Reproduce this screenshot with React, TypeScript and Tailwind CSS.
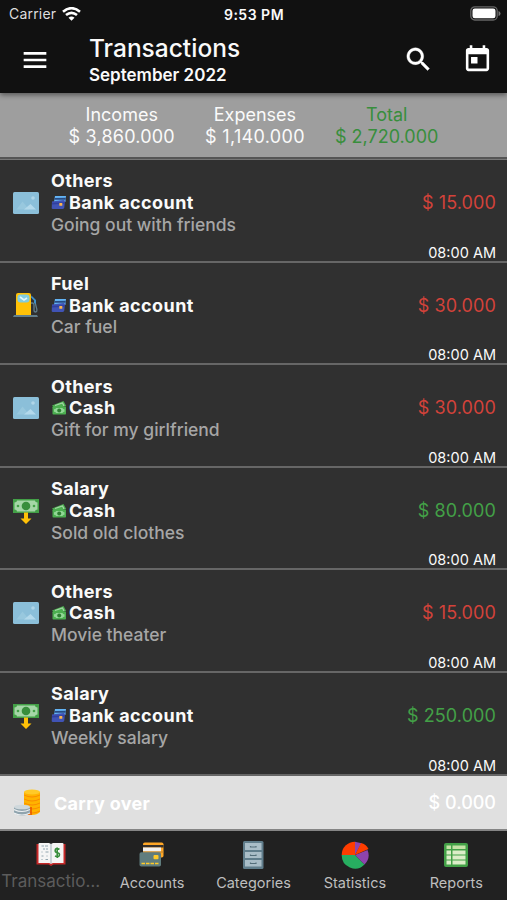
import React from 'react';

type IconType = React.FC;

interface Transaction {
  category: string;
  account: 'Bank account' | 'Cash';
  note: string;
  amount: string;
  income?: boolean;
  icon: IconType;
}

const PictureIcon: IconType = () => (
  <svg width="26" height="26" viewBox="0 0 26 26">
    <rect x="0" y="2" width="26" height="22" rx="1.5" fill="#8bbfd9" />
    <path d="M3.500 19.500 9.500 11.500 16 19.500Z" fill="#98c8de" />
    <path d="M11 19.500 17.500 14 23 19.500Z" fill="#b3d9eb" />
    <circle cx="20" cy="8" r="1.800" fill="#b0d6e8" />
  </svg>
);

const FuelIcon: IconType = () => (
  <svg width="26" height="26" viewBox="0 0 26 26">
    <path d="M18 11h1.500q1.500 0 1.500 2v5q0 2 1.600 2t1.200-3L22 10" fill="none" stroke="#607d8b" strokeWidth="1.300" />
    <path d="M18.500 3.500 23 8v4l-2-1V8.500L18 5.500Z" fill="#4090c8" />
    <path d="M3 3q0-2 2-2h11q2 0 2 2v20H3Z" fill="#ffc107" />
    <rect x="4.500" y="2.500" width="12" height="8" rx="3" fill="#81cce0" />
    <path d="m7 5 4 3 3-2" fill="none" stroke="#e1f5fe" strokeWidth="1.600" />
    <path d="M1 23h23l1 2H0Z" fill="#607d8b" />
  </svg>
);

const SalaryIcon: IconType = () => (
  <svg width="26" height="26" viewBox="0 0 26 26">
    <rect y="1" width="26" height="14" fill="#43a047" />
    <path d="M4 2.500h18q0 2 2.500 2v7q-2.500 0-2.500 2H4q0-2-2.500-2v-7q2.500 0 2.500-2Z" fill="#a5d6a7" />
    <circle cx="13" cy="8" r="4.300" fill="#388e3c" />
    <circle cx="5" cy="8" r="1.300" fill="#43a047" />
    <circle cx="21" cy="8" r="1.300" fill="#43a047" />
    <path d="M11 14.500h4v6h3.500L13 26l-5.500-5.500H11Z" fill="#ffc107" />
  </svg>
);

const BankIcon: IconType = () => (
  <svg width="16" height="16" viewBox="0 0 16 16">
    <path d="M4 1h11l-.6 6H3Z" fill="#64b5f6" />
    <path d="m3.600 3 11.200-.2-.2 2H3.300Z" fill="#294b83" />
    <path d="M1 6.500 12.500 5q1.500 0 1.400 1.500l-.6 6q-.2 1.300-1.500 1.400L1.800 14Q.7 14 .7 13Z" fill="#4053b5" />
    <path d="m1 7.700 12.700-.5v1.600L1 9.500Z" fill="#303f9f" />
    <rect x="8.300" y="8" width="3" height="2.700" rx=".5" fill="#ffb74d" />
  </svg>
);

const CashIcon: IconType = () => (
  <svg width="16" height="16" viewBox="0 0 16 16">
    <path d="M1 5.500 12.500 1l2.700 5L4 9Z" fill="#4caf50" />
    <path d="M4 5.500 11.500 3l1.500 3" fill="none" stroke="#a5d6a7" strokeWidth="1.200" />
    <rect x="1.500" y="6.500" width="13.500" height="8" rx=".7" fill="#4caf50" />
    <path d="M5 8h6.500q0 1.300 2 1.300v2.500q-2 0-2 1.300H5q0-1.300-2-1.300V9.300q2 0 2-1.300Z" fill="#91d795" />
    <circle cx="8.200" cy="10.500" r="2" fill="#2e7d32" />
  </svg>
);

const CoinsIcon: IconType = () => (
  <svg width="27" height="27" viewBox="0 0 27 27">
    <path d="M10 3v20q3 3 8 3t8-3V3Z" fill="#ffb300" />
    <ellipse cx="18" cy="3" rx="8" ry="2.500" fill="#ffca28" />
    <path d="M10 6q8 4 16 0M10 10q8 4 16 0M10 14q8 4 16 0M10 18q8 4 16 0M10 22q8 4 16 0" fill="none" stroke="#fb8c00" strokeWidth="1" />
    <path d="M14 18h4v8h-4Z" fill="#e65100" opacity=".75" />
    <path d="M0 18v6q3 2.700 8 2.700t8-2.700v-6Z" fill="#90a4ae" />
    <ellipse cx="8" cy="18" rx="8" ry="2.300" fill="#cfd8dc" />
    <path d="M0 20.500q8 4 16 0M0 24q8 4 16 0" fill="none" stroke="#eceff1" strokeWidth="1.200" />
  </svg>
);

const BookIcon: IconType = () => (
  <svg width="30" height="28" viewBox="0 0 30 28">
    <path d="M.5 4h29v20.500H17.500l-2.500 1.500-2.500-1.500H.5Z" fill="#c62828" />
    <path d="M2.500 4q0-1 1-1H13l2 1 2-1h9.500q1 0 1 1v19H17l-2 .8-2-.8H2.500Z" fill="#f5f5f5" />
    <path d="M15 4v19.500" stroke="#b0bec5" strokeWidth="1.200" />
    <path d="M5.500 6h2.500m1 0h3M7 9h2m1 0h2M5.500 12h1m3 0h3M5.500 16h2m3 0h1M5.500 19.500h1m3 0h2.500" stroke="#90a4ae" strokeWidth="1" />
    <path d="M23.500 9.300q-4-1.800-4.300.7t2.300 2.700q2.500.8 1.800 2.800t-4.300.4M21.200 7.500v10.500" fill="none" stroke="#388e3c" strokeWidth="1.600" />
  </svg>
);

const CardsIcon: IconType = () => (
  <svg width="28" height="28" viewBox="0 0 28 28">
    <rect x="5" y="1.500" width="20.500" height="15" rx="1.800" fill="#ffa726" />
    <path d="M5 4h20.500v2.500H5Z" fill="#37302b" />
    <path d="M5 6.500h18v4H5Z" fill="#f1f1f1" />
    <path d="M5 10.500h20.500v1H5Z" fill="#b97e2c" />
    <rect x="1.500" y="11.300" width="21.500" height="14.200" rx="1.800" fill="#607d7e" />
    <rect x="15.500" y="14" width="5" height="4.200" rx="1" fill="#ffca28" />
    <path d="M3.500 22.500h17" stroke="#ffca28" strokeWidth="1.600" strokeDasharray="3.500 1" />
  </svg>
);

const CabinetIcon: IconType = () => (
  <svg width="28" height="28" viewBox="0 0 28 28">
    <rect x="4" y="0" width="20.500" height="28" rx="1.500" fill="#607d8b" />
    <path d="M6 2h16.500v7H6ZM6 11h16.500v6H6ZM6 19h16.500v6.500H6Z" fill="#a9bdc7" />
    <path d="M11.500 5v1h5.500V5M11.500 13.500v1h5.500v-1M11.500 21.500v1h5.500v-1" fill="none" stroke="#546e7a" strokeWidth="1.200" />
  </svg>
);

const PieIcon: IconType = () => (
  <svg width="28" height="28" viewBox="0 0 28 28">
    <path d="M14 14V.7A13.300 13.300 0 0 0 .7 14Z" fill="#ff3d00" />
    <path d="M14 14H.7A13.300 13.300 0 0 0 23.500 23.500Z" fill="#27ae60" />
    <path d="m14 14 9.500 9.500A13.300 13.300 0 0 0 26.500 9Z" fill="#8e44ad" />
    <path d="M14 14V.7l6.500 1.500Z" fill="#8e44ad" />
    <path d="m14 14 6-12q5 1 7.500 6Z" fill="#ff3d00" />
  </svg>
);

const SheetIcon: IconType = () => (
  <svg width="26" height="26" viewBox="0 0 26 26">
    <rect x="1" y="1" width="24" height="24" rx="2" fill="#43a047" />
    <path d="M3.500 3.500h4.500v3.500H3.500ZM9.500 3.500h13v3.500H9.500Z" fill="#c5e1a5" />
    <path d="M3.500 8.500h4.500v4H3.500ZM9.500 8.500h13v4H9.500ZM3.500 13.500h4.500v4H3.500ZM9.500 13.500h13v4H9.500ZM3.500 18.500h4.500v4H3.500ZM9.500 18.500h13v4H9.500Z" fill="#dcedc8" />
  </svg>
);

const transactions: Transaction[] = [
  { category: 'Others', account: 'Bank account', note: 'Going out with friends', amount: '$ 15.000', icon: PictureIcon },
  { category: 'Fuel', account: 'Bank account', note: 'Car fuel', amount: '$ 30.000', icon: FuelIcon },
  { category: 'Others', account: 'Cash', note: 'Gift for my girlfriend', amount: '$ 30.000', icon: PictureIcon },
  { category: 'Salary', account: 'Cash', note: 'Sold old clothes', amount: '$ 80.000', income: true, icon: SalaryIcon },
  { category: 'Others', account: 'Cash', note: 'Movie theater', amount: '$ 15.000', icon: PictureIcon },
  { category: 'Salary', account: 'Bank account', note: 'Weekly salary', amount: '$ 250.000', income: true, icon: SalaryIcon },
];

const tabs = [
  { label: 'Accounts', icon: CardsIcon },
  { label: 'Categories', icon: CabinetIcon },
  { label: 'Statistics', icon: PieIcon },
  { label: 'Reports', icon: SheetIcon },
];

const StatusBar = () => (
  <div className="grid h-[27px] grid-cols-3 items-center pr-[6px] pl-[9px] text-[14px]">
    <div className="flex items-center gap-[6px] tracking-[0.2px] text-[#dedede]">
      Carrier
      <svg width="19" height="14" viewBox="0 0 19 14" fill="none" stroke="#fff" strokeWidth="2.600">
        <path d="M1 4.700q8.500-7 17 0M4 8.100q5.500-4.600 11 0" />
        <path d="m6.500 10.700 3 3 3-3q-3-2.200-6 0Z" fill="#fff" stroke="none" />
      </svg>
    </div>
    <div className="pt-[1px] pr-[2px] text-center text-[14px] font-semibold tracking-[0.5px] whitespace-nowrap">9:53 PM</div>
    <div className="flex justify-end">
      <svg width="31" height="15" viewBox="0 0 31 15">
        <rect x=".8" y=".8" width="26.400" height="13.200" rx="4" fill="none" stroke="#666" strokeWidth="1.300" />
        <rect x="2.500" y="2.500" width="23" height="9.800" rx="2.300" fill="#fff" />
        <path d="M28.500 5q2 .5 2 2.500t-2 2.500Z" fill="#777" />
      </svg>
    </div>
  </div>
);

const AppBar = () => (
  <header className="relative z-10 h-[93px] shrink-0 bg-[#111] shadow-[0_2px_5px_rgba(0,0,0,0.45)]">
    <StatusBar />
    <div className="flex h-[66px] items-center pr-[14px] pl-[19px]">
      <svg width="32" height="32" viewBox="0 0 24 24" fill="#fff">
        <path d="M3.500 18h17v-2h-17v2Zm0-5h17v-2h-17v2Zm0-7v2h17V6h-17Z" />
      </svg>
      <div className="ml-[38px] flex-1">
        <h1 className="text-[24.5px] leading-[29px] font-medium">Transactions</h1>
        <p className="text-[17px] leading-6 font-semibold">September 2022</p>
      </div>
      <svg className="mb-[2px]" width="31" height="31" viewBox="0 0 24 24" fill="#fff" stroke="#fff" strokeWidth=".3">
        <path d="M15.500 14h-.79l-.28-.27A6.500 6.500 0 1 0 13.730 14.430l.27.28v.79l5 4.990L20.490 19l-4.990-5Zm-6 0a4.500 4.500 0 1 1 0-9 4.500 4.500 0 0 1 0 9Z" />
      </svg>
      <svg className="mb-[2px] ml-[28px]" width="31" height="31" viewBox="0 0 24 24" fill="#fff">
        <path d="M19 3h-1V1h-2v2H8V1H6v2H5c-1.110 0-1.990.9-1.990 2L3 19c0 1.100.89 2 2 2h14c1.100 0 2-.9 2-2V5c0-1.100-.9-2-2-2Zm0 16H5V8h14v11ZM7 10h5v5H7Z" />
      </svg>
    </div>
  </header>
);

const Summary = () => (
  <section className="flex h-[64px] shrink-0 justify-center gap-[30px] bg-[#9e9e9e] pt-[11px] text-center text-[18px] leading-[21.6px]">
    <div>
      <p>Incomes</p>
      <p className="tracking-[0.2px]">$ 3,860.000</p>
    </div>
    <div>
      <p>Expenses</p>
      <p className="tracking-[0.35px]">$ 1,140.000</p>
    </div>
    <div className="text-[#388e3c]">
      <p>Total</p>
      <p>$ 2,720.000</p>
    </div>
  </section>
);

const TransactionRow: React.FC<{ item: Transaction }> = ({ item }) => {
  const Icon = item.icon;
  return (
    <li className="flex h-[102.6px] border-b-2 border-[#666] pr-[11px] pl-[13px]">
      <div className="flex w-[38px] shrink-0 items-center pb-[15px]">
        <Icon />
      </div>
      <div className="flex-1 pt-[10.4px] text-[17.5px] leading-[21.7px] whitespace-nowrap">
        <p className="text-[18px] font-bold tracking-[0.35px]">{item.category}</p>
        <p className="flex items-center text-[18px] font-bold tracking-[0.4px]">
          <span className="mr-[2px] flex w-4">{item.account === 'Cash' ? <CashIcon /> : <BankIcon />}</span>
          {item.account}
        </p>
        <p className="font-medium text-[#a6a6a6]">{item.note}</p>
      </div>
      <div className="flex flex-col text-right">
        <p className={item.income ? 'pt-[32px] text-[18px] leading-[22px] tracking-[0.1px] text-[#43a047]' : 'pt-[32px] text-[18px] leading-[22px] tracking-[0.1px] text-[#d3423a]'}>
          {item.amount}
        </p>
        <p className="mt-auto text-[14.5px] leading-4">08:00 AM</p>
      </div>
    </li>
  );
};

const CarryOver = () => (
  <div className="flex h-[55px] shrink-0 items-center border-b-2 border-[#858585] bg-[#e0e0e0] pr-[11px] pl-[14px]">
    <CoinsIcon />
    <span className="ml-[13px] flex-1 pt-[2px] text-[18px] font-bold tracking-[0.3px] text-white">Carry over</span>
    <span className="pt-[1px] text-[18px] font-medium text-white">$ 0.000</span>
  </div>
);

const BottomNav = () => (
  <nav className="grid flex-1 grid-cols-5 bg-[#212121] text-center text-[14.5px] text-[#bebebe]">
    <div className="flex flex-col items-center pt-[9px]">
      <BookIcon />
      <span className="mt-[3px] text-[17px] leading-[20px] text-[#5c5c5c]">Transactio…</span>
    </div>
    {tabs.map(({ label, icon: Icon }) => (
      <div key={label} className="flex flex-col items-center pt-[10px]">
        <div className="flex h-7 items-center">
          <Icon />
        </div>
        <span className="mt-[4px] leading-[20px]">{label}</span>
      </div>
    ))}
  </nav>
);

export default function App() {
  return (
    <div className="flex h-[900px] w-[507px] flex-col overflow-hidden bg-[#303030] font-['Inter',sans-serif] text-[#fafafa]">
      <AppBar />
      <Summary />
      <main className="shrink-0 border-t-2 border-[#555]">
        <ul className="border-t border-[#777]">
          {transactions.map((item, index) => (
            <TransactionRow key={index} item={item} />
          ))}
        </ul>
      </main>
      <CarryOver />
      <BottomNav />
    </div>
  );
}
